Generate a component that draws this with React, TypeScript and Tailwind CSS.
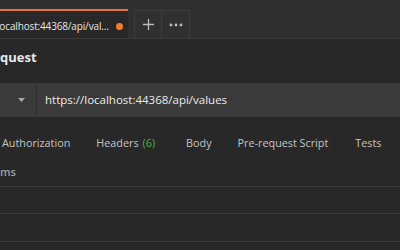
import React from "react";

const tabs = [
  { label: "Authorization", ml: "ml-[2px]" },
  { label: "Headers", count: "(6)", ml: "ml-[26px]" },
  { label: "Body", ml: "ml-[31px]" },
  { label: "Pre-request Script", ml: "ml-[26px]" },
  { label: "Tests", ml: "ml-[27px]" },
];

export default function App() {
  return (
    <div
      className="h-[250px] w-[400px] overflow-hidden bg-[#282828] text-[#d0d0d0]"
      style={{ fontFamily: '"Open Sans", "Liberation Sans", sans-serif' }}
    >
      {/* tab strip */}
      <div className="flex h-[39px] items-end border-b border-[#3a3a3a] bg-[#303030]">
        <div className="flex h-[29px] w-[128px] items-center border-t-2 border-[#e8703a] bg-[#282828] pr-[5px] pt-[3px]">
          <span className="ml-[-3px] min-w-0 flex-1 whitespace-nowrap text-[10px] tracking-[-0.15px] text-[#e6e6e6]">
            localhost:44368/api/val...
          </span>
          <span className="ml-[3px] h-[7px] w-[7px] shrink-0 rounded-full bg-[#f47d2a]" />
        </div>
        <div className="ml-[6px] flex h-[28px] w-[28px] items-center justify-center border border-b-0 border-[#3c3c3c] text-[#bdbdbd]">
          <svg width="11" height="11" viewBox="0 0 11 11">
            <path d="M5.5 0v11M0 5.5h11" stroke="currentColor" strokeWidth="1.3" />
          </svg>
        </div>
        <div className="flex h-[28px] w-[28px] items-center justify-center border border-b-0 border-l-0 border-[#3c3c3c] text-[#bdbdbd]">
          <svg width="14" height="4" viewBox="0 0 14 4">
            <circle cx="2" cy="2" r="1.4" fill="currentColor" />
            <circle cx="7" cy="2" r="1.4" fill="currentColor" />
            <circle cx="12" cy="2" r="1.4" fill="currentColor" />
          </svg>
        </div>
      </div>

      {/* request name */}
      <div className="flex h-[36px] items-center pt-[2px]">
        <span className="text-[13px] font-bold text-[#e8e8e8]">quest</span>
      </div>

      {/* url bar */}
      <div className="mt-[8px] flex h-[34px] bg-[#3a3a3a]">
        <div className="flex w-[37px] items-center justify-end border-r border-[#2e2e2e] pr-[11px]">
          <svg width="7" height="4" viewBox="0 0 7 4">
            <path d="M0 0h7L3.5 4z" fill="#a8a8a8" />
          </svg>
        </div>
        <div className="flex flex-1 items-center pl-[8px] text-[11.5px] text-[#ececec]">
          https://localhost:44368/api/values
        </div>
      </div>

      {/* request tabs */}
      <div className="mt-[17px] flex h-[18px] items-center whitespace-nowrap text-[10.8px] text-[#c4c4c4]">
        {tabs.map((t) => (
          <span key={t.label} className={t.ml}>
            {t.label}
            {t.count && <span className="ml-[4px] text-[#4caf50]">{t.count}</span>}
          </span>
        ))}
      </div>

      {/* params */}
      <div className="mt-[13px] flex h-[14px] items-center text-[11px] font-semibold text-[#a0a0a0]">
        ms
      </div>
      <div className="mt-[7px] h-[27px] border-t border-[#3a3a3a]" />
      <div className="h-[28px] border-t border-[#3a3a3a]" />
      <div className="border-t border-[#3a3a3a]" />
    </div>
  );
}
